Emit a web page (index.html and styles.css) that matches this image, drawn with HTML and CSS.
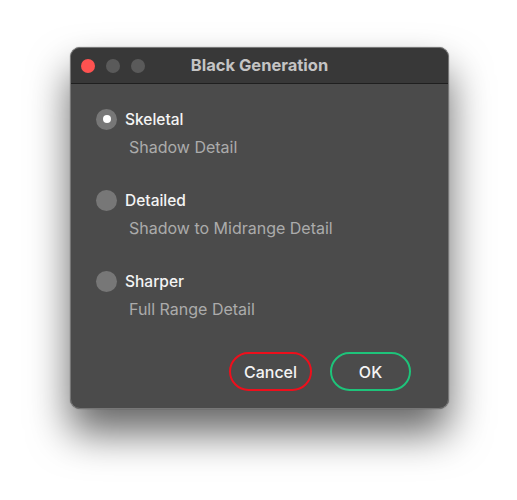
FILE: index.html
```html
<!DOCTYPE html>
<html>
<head>
<meta charset="utf-8">
<link rel="stylesheet" href="styles.css">
</head>
<body>
<div class="stage">
  <div class="window">
    <div class="titlebar">
      <div class="lights">
        <span class="light red"></span>
        <span class="light gray"></span>
        <span class="light gray"></span>
      </div>
      <div class="title">Black Generation</div>
    </div>
    <div class="content">
      <div class="group">
        <div class="row"><span class="radio selected"></span><span class="label">Skeletal</span></div>
        <div class="sub">Shadow Detail</div>
      </div>
      <div class="group">
        <div class="row"><span class="radio"></span><span class="label">Detailed</span></div>
        <div class="sub">Shadow to Midrange Detail</div>
      </div>
      <div class="group">
        <div class="row"><span class="radio"></span><span class="label">Sharper</span></div>
        <div class="sub">Full Range Detail</div>
      </div>
      <div class="buttons">
        <button class="btn cancel">Cancel</button>
        <button class="btn ok">OK</button>
      </div>
    </div>
  </div>
</div>
</body>
</html>
```
FILE: styles.css
```css
html, body {
  margin: 0;
  padding: 0;
  background: #ffffff;
  font-family: "Inter", "Liberation Sans", sans-serif;
}
.stage {
  width: 517px;
  height: 500px;
  padding: 47px 0 0 70px;
  box-sizing: border-box;
}
.window {
  width: 379px;
  height: 362px;
  box-sizing: border-box;
  background: #4b4b4b;
  border-radius: 10px;
  border: 1px solid #777;
  box-shadow: 0 24px 40px rgba(0,0,0,0.6), 0 0 1px rgba(0,0,0,0.6);
  display: flex;
  flex-direction: column;
  overflow: hidden;
}
.titlebar {
  height: 35px;
  flex: none;
  background: #383838;
  border-bottom: 1px solid #1f1f1f;
  display: flex;
  align-items: center;
  position: relative;
}
.lights {
  display: flex;
  gap: 11px;
  padding-left: 10px;
}
.light {
  width: 14px;
  height: 14px;
  border-radius: 50%;
  background: #5a5a5a;
}
.light.red {
  background: #fe5250;
}
.title {
  position: absolute;
  left: 0;
  right: 0;
  top: 0;
  line-height: 35px;
  text-align: center;
  color: #c4c4c4;
  font-size: 16.5px;
  font-weight: 700;
}
.content {
  flex: 1;
  display: flex;
  flex-direction: column;
  padding: 24px 37px 17px 25px;
}
.group {
  margin-bottom: 32px;
}
.group:nth-child(3) {
  margin-bottom: 0;
}
.row {
  display: flex;
  align-items: center;
  height: 22px;
}
.radio {
  width: 21px;
  height: 21px;
  border-radius: 50%;
  background: #777777;
  flex: none;
  margin-right: 8px;
  display: flex;
  align-items: center;
  justify-content: center;
}
.radio.selected::after {
  content: "";
  width: 8px;
  height: 8px;
  border-radius: 50%;
  background: #ffffff;
}
.label {
  color: #f4f4f4;
  font-size: 15.5px;
  font-weight: 500;
}
.sub {
  margin-top: 7px;
  padding-left: 33px;
  color: #ababab;
  font-size: 16px;
  line-height: 20px;
}
.buttons {
  margin-top: auto;
  display: flex;
  justify-content: flex-end;
  gap: 18px;
}
.btn {
  height: 39px;
  border-radius: 20px;
  background: transparent;
  color: #f4f4f4;
  font-family: "Inter", "Liberation Sans", sans-serif;
  font-size: 16px;
  font-weight: 500;
  box-sizing: border-box;
  padding: 0;
}
.cancel {
  width: 83px;
  border: 2.5px solid #ee0f1c;
}
.ok {
  width: 81px;
  border: 2.5px solid #1ec37a;
}
```
